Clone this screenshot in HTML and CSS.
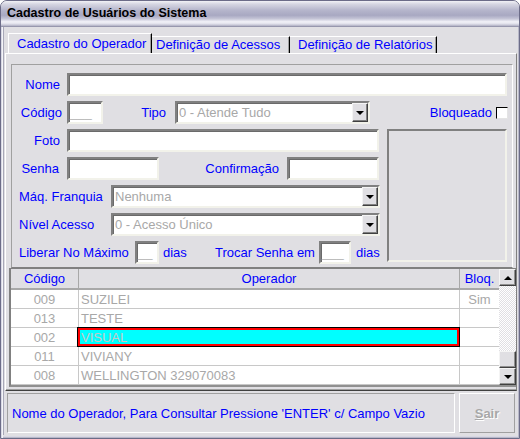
FILE: index.html
```html
<!DOCTYPE html>
<html lang="pt-BR">
<head>
<meta charset="utf-8">
<title>Cadastro de Usuários do Sistema</title>
<link rel="stylesheet" href="styles.css">
</head>
<body>
<div class="window">
  <div class="titlebar">Cadastro de Usuários do Sistema</div>
  <div class="frame">
    <div class="client">
      <div class="tabs">
        <div class="tab tab-active">Cadastro do Operador</div>
        <div class="tab tab-2">Definição de Acessos</div>
        <div class="tab tab-3">Definição de Relatórios</div>
      </div>
      <div class="page">
        <div class="panel">
          <div class="row">
            <span class="lbl w48 r mr7">Nome</span>
            <span class="edit w440"></span>
          </div>
          <div class="row">
            <span class="lbl w50 r mr5">Código</span>
            <span class="edit w36"><span class="mask">___</span></span>
            <span class="lbl w63 r mr9">Tipo</span>
            <span class="combo w195"><span class="ctext">0 - Atende Tudo</span><span class="cbtn"><span class="tri-down"></span></span></span>
            <span class="lbl w122 r mr4">Bloqueado</span>
            <span class="check"></span>
          </div>
          <div class="lower">
            <div class="leftcol">
              <div class="row">
                <span class="lbl w48 r mr7">Foto</span>
                <span class="edit w312"></span>
              </div>
              <div class="row">
                <span class="lbl w47 r mr8">Senha</span>
                <span class="edit w92"></span>
                <span class="lbl w120 r mr8">Confirmação</span>
                <span class="edit w92"></span>
              </div>
              <div class="row">
                <span class="lbl w99 pl7">Máq. Franquia</span>
                <span class="combo w269"><span class="ctext">Nenhuma</span><span class="cbtn"><span class="tri-down"></span></span></span>
              </div>
              <div class="row">
                <span class="lbl w99 pl7">Nível Acesso</span>
                <span class="combo w269"><span class="ctext">0 - Acesso Único</span><span class="cbtn"><span class="tri-down"></span></span></span>
              </div>
              <div class="row">
                <span class="lbl w123 pl7">Liberar No Máximo</span>
                <span class="edit w24"><span class="mask">__</span></span>
                <span class="lbl w56 pl4">dias</span>
                <span class="lbl w104">Trocar Senha em</span>
                <span class="edit w32"><span class="mask">___</span></span>
                <span class="lbl pl5">dias</span>
              </div>
            </div>
            <div class="photo"></div>
          </div>
        </div>
        <div class="grid">
          <div class="table">
            <div class="tr head">
              <span class="td c1">Código</span>
              <span class="td c2 center">Operador</span>
              <span class="td c3">Bloq.</span>
            </div>
            <div class="tr">
              <span class="td c1">009</span>
              <span class="td c2">SUZILEI</span>
              <span class="td c3">Sim</span>
            </div>
            <div class="tr">
              <span class="td c1">013</span>
              <span class="td c2">TESTE</span>
              <span class="td c3"></span>
            </div>
            <div class="tr">
              <span class="td c1">002</span>
              <span class="td c2 sel">VISUAL</span>
              <span class="td c3"></span>
            </div>
            <div class="tr">
              <span class="td c1">011</span>
              <span class="td c2">VIVIANY</span>
              <span class="td c3"></span>
            </div>
            <div class="tr">
              <span class="td c1">008</span>
              <span class="td c2">WELLINGTON 329070083</span>
              <span class="td c3"></span>
            </div>
          </div>
          <div class="scroll">
            <span class="sbtn"><span class="tri-up"></span></span>
            <span class="track"></span>
            <span class="sbtn"></span>
            <span class="sbtn"><span class="tri-down"></span></span>
          </div>
        </div>
      </div>
      <div class="status">
        <div class="hint">Nome do Operador, Para Consultar Pressione 'ENTER' c/ Campo Vazio</div>
        <div class="btn-sair"><span class="u">S</span>air</div>
      </div>
    </div>
  </div>
</div>
</body>
</html>
```
FILE: styles.css
```css
html, body {
  margin: 0;
  padding: 0;
  background: #ffffff;
}
body {
  font-family: "Liberation Sans", Arial, sans-serif;
  font-size: 13px;
  color: #0000ff;
}
.window {
  width: 520px;
  height: 439px;
  box-sizing: border-box;
  border: 1px solid #6c6c88;
  border-radius: 7px 7px 0 0;
  background: #e0dfe3;
  display: flex;
  flex-direction: column;
  overflow: hidden;
}
.titlebar {
  height: 26px;
  box-sizing: border-box;
  padding-left: 6px;
  line-height: 25px;
  font-weight: bold;
  font-size: 12.5px;
  color: #000;
  background: linear-gradient(to bottom, #f2f2f6 0%, #d6d6e2 12%, #b6b6cc 35%, #a8a8c2 55%, #c4c4d6 68%, #f2f2f8 80%, #e0e0ea 88%, #b0b0c4 96%, #808098 100%);
}
.frame {
  flex: 1;
  display: flex;
  padding: 0 2px 3px 3px;
  box-shadow: inset 1px 0 #d8d8e4, inset 2px 0 #f4f4f8, inset -1px 0 #b8b8c8, inset 0 -1px #b8b8c8, inset 0 -2px #d8d8e4;
}
.client {
  flex: 1;
  display: flex;
  flex-direction: column;
  background: #e0dfe3;
  box-shadow: -1px 0 #a8a8b8;
}
.tabs {
  display: flex;
  height: 20px;
  margin: 6px 0 0 4px;
  align-items: flex-end;
}
.tab {
  height: 17px;
  box-sizing: border-box;
  line-height: 15px;
  border-top: 1px solid #ffffff;
  border-left: 1px solid #ffffff;
  border-right: 1px solid #000000;
  box-shadow: inset -1px 0 #a0a0a0;
  white-space: nowrap;
}
.tab-active {
  height: 20px;
  width: 144px;
  padding-left: 8px;
  line-height: 20px;
}
.tab-2 {
  width: 138px;
  padding-left: 4px;
  border-left: none;
}
.tab-3 {
  width: 147px;
  padding-left: 8px;
  border-left: none;
}
.page {
  height: 338px;
  box-sizing: border-box;
  margin-left: 1px;
  border-top: 1px solid #ffffff;
  border-left: 1px solid #ffffff;
  border-right: 1px solid #808080;
  border-bottom: 1px solid #404040;
  box-shadow: inset 0 -1px #a0a0a0;
  display: flex;
  flex-direction: column;
}
.panel {
  width: 502px;
  height: 204px;
  box-sizing: border-box;
  margin: 10px 0 0 5px;
  border-top: 1px solid #a0a0a0;
  border-left: 1px solid #a0a0a0;
  border-right: 1px solid #ffffff;
  border-bottom: 1px solid #808080;
  padding-top: 8px;
  display: flex;
  flex-direction: column;
  gap: 5px;
}
.row {
  display: flex;
  align-items: center;
  height: 23px;
}
.lower {
  display: flex;
}
.leftcol {
  width: 368px;
  display: flex;
  flex-direction: column;
  gap: 5px;
}
.photo {
  width: 120px;
  height: 133px;
  box-sizing: border-box;
  margin-left: 7px;
  border: 2px solid;
  border-color: #808080 #f2f2ea #f2f2ea #808080;
  background: #e0dfe3;
}
.lbl {
  display: block;
  box-sizing: border-box;
  white-space: nowrap;
  flex: none;
}
.r { text-align: right; }
.mr4 { margin-right: 4px; }
.mr5 { margin-right: 5px; }
.mr7 { margin-right: 7px; }
.mr8 { margin-right: 8px; }
.mr9 { margin-right: 9px; }
.pl4 { padding-left: 4px; }
.pl5 { padding-left: 5px; }
.pl7 { padding-left: 7px; }
.w24 { width: 24px; }
.w32 { width: 32px; }
.w36 { width: 36px; }
.w47 { width: 47px; }
.w48 { width: 48px; }
.w50 { width: 50px; }
.w56 { width: 56px; }
.w63 { width: 63px; }
.w92 { width: 92px; }
.w99 { width: 99px; }
.w104 { width: 104px; }
.w120 { width: 120px; }
.w122 { width: 122px; }
.w123 { width: 123px; }
.w195 { width: 195px; }
.w269 { width: 269px; }
.w312 { width: 312px; }
.w440 { width: 440px; }
.edit, .combo {
  display: flex;
  align-items: center;
  flex: none;
  height: 23px;
  box-sizing: border-box;
  border: 2px solid;
  border-color: #808080 #f2f2ea #f2f2ea #808080;
  box-shadow: inset 1px 1px #6a6a6a;
  background: #ffffff;
  overflow: hidden;
}
.mask {
  padding-left: 1px;
  color: #b4b4b4;
  line-height: 19px;
}
.ctext {
  flex: 1;
  padding-left: 2px;
  color: #a8a8a8;
  white-space: nowrap;
}
.cbtn {
  width: 16px;
  height: 19px;
  box-sizing: border-box;
  background: #e0dfe3;
  border-top: 1px solid #f4f4f4;
  border-left: 1px solid #f4f4f4;
  border-right: 1px solid #404040;
  border-bottom: 1px solid #404040;
  box-shadow: inset -1px -1px #808080;
  display: flex;
  align-items: center;
  justify-content: center;
}
.tri-down {
  width: 0;
  height: 0;
  border-left: 4px solid transparent;
  border-right: 4px solid transparent;
  border-top: 4px solid #000000;
}
.tri-up {
  width: 0;
  height: 0;
  border-left: 4px solid transparent;
  border-right: 4px solid transparent;
  border-bottom: 4px solid #000000;
}
.check {
  width: 12px;
  height: 12px;
  box-sizing: border-box;
  border: 1px solid;
  border-color: #000000 #e4e4e4 #e4e4e4 #000000;
  background: #ffffff;
  flex: none;
}
.grid {
  display: flex;
  width: 507px;
  height: 119px;
  box-sizing: border-box;
  margin-left: 3px;
  border-top: 1px solid #808080;
  border-left: 2px solid #808080;
  border-bottom: 2px solid #909090;
  box-shadow: inset 1px 0 #404040;
}
.table {
  width: 488px;
  display: flex;
  flex-direction: column;
  background: #ffffff;
}
.tr {
  display: flex;
  height: 19px;
  box-sizing: border-box;
  border-bottom: 1px solid #c8c8c8;
}
.tr.head {
  height: 21px;
  border-bottom: 2px solid #a8a8a8;
  background: #e0dfe3;
}
.td {
  display: flex;
  align-items: center;
  box-sizing: border-box;
  border-right: 1px solid #c8c8c8;
  color: #a8a8a8;
  white-space: nowrap;
  position: relative;
}
.head .td {
  color: #0000ff;
  border-right-color: #a8a8a8;
}
.c1 { width: 68px; justify-content: center; }
.c2 { width: 381px; padding-left: 2px; }
.c3 { width: 39px; justify-content: center; border-right: none; }
.center { justify-content: center; padding-left: 0; }
.sel {
  background: #00ffff;
  color: #c8c8c8;
}
.sel::after {
  content: "";
  position: absolute;
  top: -1px;
  left: -2px;
  right: -1px;
  bottom: -1px;
  border: 1px solid #000000;
  box-shadow: inset 0 0 0 2px #ff0000;
}
.scroll {
  width: 17px;
  display: flex;
  flex-direction: column;
}
.sbtn {
  height: 17px;
  box-sizing: border-box;
  background: #e0dfe3;
  border-top: 1px solid #f4f4f4;
  border-left: 1px solid #f4f4f4;
  border-right: 1px solid #404040;
  border-bottom: 1px solid #404040;
  box-shadow: inset -1px -1px #909090;
  display: flex;
  align-items: center;
  justify-content: center;
}
.track {
  flex: 1;
  background: repeating-conic-gradient(#ffffff 0 25%, #e0dfe3 0 50%) 0 0 / 2px 2px;
}
.status {
  display: flex;
  height: 40px;
  margin: 2px 0 0 3px;
  gap: 4px;
}
.hint {
  width: 448px;
  box-sizing: border-box;
  border-top: 1px solid #a0a0a0;
  border-left: 1px solid #a0a0a0;
  border-right: 1px solid #ffffff;
  border-bottom: 1px solid #ffffff;
  padding-left: 4px;
  display: flex;
  align-items: center;
  white-space: nowrap;
}
.btn-sair {
  width: 56px;
  box-sizing: border-box;
  border-top: 1px solid #ffffff;
  border-left: 1px solid #ffffff;
  border-right: 1px solid #a0a0a0;
  border-bottom: 1px solid #a0a0a0;
  display: flex;
  align-items: center;
  justify-content: center;
  font-weight: bold;
  color: #a8a8a8;
  text-shadow: 1px 1px #ffffff;
}
.u {
  text-decoration: underline;
}
```
